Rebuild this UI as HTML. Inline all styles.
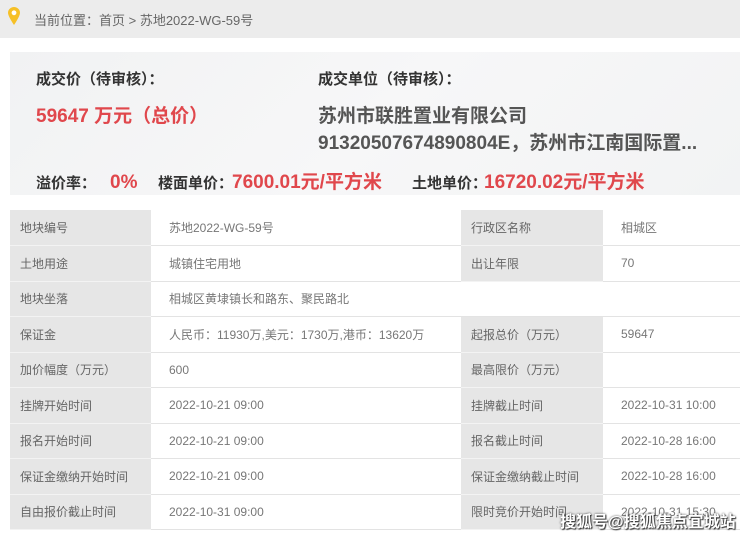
<!DOCTYPE html>
<html><head><meta charset="utf-8"><style>
*{margin:0;padding:0;box-sizing:border-box}
body{width:740px;height:537px;overflow:hidden;background:#fff;font-family:"Liberation Sans","Noto Sans CJK SC",sans-serif;position:relative}
.bc{position:absolute;left:0;top:0;width:740px;height:38px;background:#ececec;font-size:13px;color:#666}
.bc span{position:absolute;left:34px;top:10px}
.sum{position:absolute;left:10px;top:52px;width:730px;height:143px;background:linear-gradient(135deg,#f1f2f3,#f7f7f8 50%,#f2f3f4)}
.t{position:absolute;white-space:nowrap;line-height:26px;height:26px}
.lab{font-size:15px;font-weight:bold;color:#333}
.red{color:#e0474c;font-weight:bold;font-size:19px}
.co{font-size:19px;font-weight:bold;color:#555}
table{position:absolute;left:10px;top:210px;width:730px;border-collapse:collapse;font-size:12px}
td{height:35.5px;border-bottom:1px solid #e3e3e3;padding-left:10px;color:#777}
td.l{background:#e6e6e6;color:#666;border-bottom:1px solid #f3f3f3}
td.v{padding-left:18px}
.wm{position:absolute;left:560px;top:508px;font-size:16px;font-weight:bold;color:#fff;white-space:nowrap;text-shadow:0 0 2px #333,1px 1px 1px #333}
</style></head><body>
<div class="bc"><svg style="position:absolute;left:8px;top:7px" width="12" height="18" viewBox="0 0 12 18"><path d="M6 0C2.7 0 0 2.6 0 5.8 0 9.5 6 18 6 18S12 9.5 12 5.8C12 2.6 9.3 0 6 0Z" fill="#f6c026"/><circle cx="6" cy="5.8" r="2.4" fill="#fff"/></svg><span>当前位置：首页 &gt; 苏地2022-WG-59号</span></div>
<div class="sum"></div>
<div class="t lab" style="left:36px;top:67px">成交价（待审核）：</div>
<div class="t red" style="left:36px;top:104px">59647 万元（总价）</div>
<div class="t lab" style="left:318px;top:67px">成交单位（待审核）：</div>
<div class="t co" style="left:318px;top:104px">苏州市联胜置业有限公司</div>
<div class="t co" style="left:318px;top:131px">91320507674890804E，苏州市江南国际置...</div>
<div class="t lab" style="left:36px;top:171px">溢价率：</div>
<div class="t red" style="left:110px;top:170px">0%</div>
<div class="t lab" style="left:158px;top:171px">楼面单价：</div>
<div class="t red" style="left:232px;top:170px">7600.01元/平方米</div>
<div class="t lab" style="left:412px;top:171px">土地单价：</div>
<div class="t red" style="left:484px;top:170px">16720.02元/平方米</div>
<table>
<colgroup><col style="width:141px"><col style="width:310px"><col style="width:142px"><col></colgroup>
<tr><td class="l">地块编号</td><td class="v">苏地2022-WG-59号</td><td class="l">行政区名称</td><td class="v">相城区</td></tr>
<tr><td class="l">土地用途</td><td class="v">城镇住宅用地</td><td class="l">出让年限</td><td class="v">70</td></tr>
<tr><td class="l">地块坐落</td><td class="v" colspan="3">相城区黄埭镇长和路东、聚民路北</td></tr>
<tr><td class="l">保证金</td><td class="v">人民币：11930万,美元：1730万,港币：13620万</td><td class="l">起报总价（万元）</td><td class="v">59647</td></tr>
<tr><td class="l">加价幅度（万元）</td><td class="v">600</td><td class="l">最高限价（万元）</td><td class="v"></td></tr>
<tr><td class="l">挂牌开始时间</td><td class="v">2022-10-21 09:00</td><td class="l">挂牌截止时间</td><td class="v">2022-10-31 10:00</td></tr>
<tr><td class="l">报名开始时间</td><td class="v">2022-10-21 09:00</td><td class="l">报名截止时间</td><td class="v">2022-10-28 16:00</td></tr>
<tr><td class="l">保证金缴纳开始时间</td><td class="v">2022-10-21 09:00</td><td class="l">保证金缴纳截止时间</td><td class="v">2022-10-28 16:00</td></tr>
<tr><td class="l">自由报价截止时间</td><td class="v">2022-10-31 09:00</td><td class="l">限时竞价开始时间</td><td class="v">2022-10-31 15:30</td></tr>
</table>
<div class="wm">搜狐号@搜狐焦点宜城站</div>
</body></html>
